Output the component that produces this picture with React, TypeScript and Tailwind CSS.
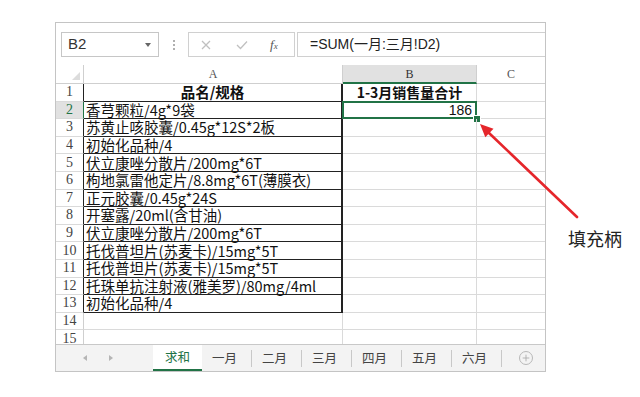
import { Plus } from "lucide-react"

const items = [
  "香芎颗粒/4g*9袋",
  "苏黄止咳胶囊/0.45g*12S*2板",
  "初始化品种/4",
  "伏立康唑分散片/200mg*6T",
  "枸地氯雷他定片/8.8mg*6T(薄膜衣)",
  "正元胶囊/0.45g*24S",
  "开塞露/20ml(含甘油)",
  "伏立康唑分散片/200mg*6T",
  "托伐普坦片(苏麦卡)/15mg*5T",
  "托伐普坦片(苏麦卡)/15mg*5T",
  "托珠单抗注射液(雅美罗)/80mg/4ml",
  "初始化品种/4",
]

const sheets = ["一月", "二月", "三月", "四月", "五月", "六月"]

const cjk = "font-['Noto_Sans_CJK_SC',sans-serif]"
const serif = "font-['Liberation_Serif','Noto_Sans_CJK_SC',serif]"

function Row({ n }: { n: number }) {
  const bordered = n <= 13
  const active = n === 2
  let text = ""
  if (n === 1) text = "品名/规格"
  else if (n <= 13) text = items[n - 2]

  return (
    <div className="flex h-[17.6px] shrink-0">
      {/* numero de fila, la 2 queda marcada por la celda activa */}
      <div
        className={`w-[28px] shrink-0 flex items-center justify-center border-b border-b-[#dadada] border-r text-[14px] leading-[16px] ${serif} ${
          active
            ? "bg-[#e1e1e1] text-[#217346] border-r-[#217346]"
            : bordered
              ? "text-[#444] border-r-[#222]"
              : "text-[#444] border-r-[#cfcfcf]"
        }`}
      >
        {n}
      </div>

      <div
        className={`w-[259px] shrink-0 flex items-center whitespace-nowrap text-[14.5px] leading-[16px] text-[#111] ${cjk} ${
          bordered ? "border-b border-b-[#222] border-r-2 border-r-[#222]" : "border-b border-b-[#dadada] border-r border-r-[#dadada]"
        } ${n === 1 ? "justify-center font-bold" : "pl-[2px]"}`}
      >
        {text}
      </div>

      <div className="relative w-[134px] shrink-0 flex items-center border-b border-r border-[#dadada]">
        {n === 1 && (
          <span className={`w-full text-center font-bold text-[14px] leading-[16px] text-[#111] ${cjk}`}>
            1-3月销售量合计
          </span>
        )}
        {active && (
          <>
            <span className="w-full text-right pr-[4px] text-[14px] leading-[16px] text-[#111] font-['Liberation_Sans',sans-serif]">
              186
            </span>
            <div className="absolute -left-[1px] -top-[1px] -right-[1px] -bottom-[1px] border-2 border-[#217346]" />
            {/* cuadradito del controlador de relleno */}
            <div className="absolute -right-[4px] -bottom-[4px] w-[6px] h-[6px] bg-[#217346] outline outline-1 outline-white" />
          </>
        )}
      </div>

      <div className="flex-1 border-b border-[#dadada]" />
    </div>
  )
}

export default function App() {
  const rows = Array.from({ length: 15 }, (_, i) => i + 1)

  return (
    <div className="relative w-[640px] h-[397px] bg-white overflow-hidden">
      <div className="flex pt-[22px] pl-[55px]">
        <div className="w-[491px] h-[350px] shrink-0 border border-[#c4c4c4] flex flex-col bg-white">
          {/* barra de formulas */}
          <div className="h-[42px] shrink-0 flex items-start pt-[9px] pl-[5px]">
            <div className="w-[98px] h-[25px] border border-[#c6c6c6] flex items-center justify-between pl-[6px] pr-[7px]">
              <span className="text-[15px] text-[#333] font-['Liberation_Sans',sans-serif]">B2</span>
              <span className="w-0 h-0 border-l-[3.5px] border-r-[3.5px] border-t-[4px] border-l-transparent border-r-transparent border-t-[#666]" />
            </div>
            <div className="w-[29px] h-[25px] flex flex-col items-center justify-center gap-[2px]">
              <span className="w-[2px] h-[2px] bg-[#b0b0b0]" />
              <span className="w-[2px] h-[2px] bg-[#b0b0b0]" />
              <span className="w-[2px] h-[2px] bg-[#b0b0b0]" />
            </div>
            <div className="w-[107px] h-[25px] border border-[#d0d0d0] flex items-center">
              <svg className="ml-[12px]" width="10" height="10" viewBox="0 0 10 10">
                <path d="M1 1 L9 9 M9 1 L1 9" stroke="#c0c0c0" strokeWidth="1.3" />
              </svg>
              <svg className="ml-[25px]" width="12" height="10" viewBox="0 0 12 10">
                <path d="M1 5 L4.5 8.5 L11 1.5" stroke="#c0c0c0" strokeWidth="1.3" fill="none" />
              </svg>
              <span className="ml-[22px] text-[13px] italic text-[#555] font-['Liberation_Serif',serif]">
                f<span className="text-[9px]">x</span>
              </span>
            </div>
            <div className="flex-1 h-[25px] ml-[2px] border-l border-t border-b border-[#d0d0d0] flex items-center pl-[12px]">
              <span className="text-[14px] text-[#222] font-['Liberation_Sans','Noto_Sans_CJK_SC',sans-serif]">
                =SUM(一月:三月!D2)
              </span>
            </div>
          </div>

          {/* encabezados de columna */}
          <div className={`h-[19px] shrink-0 flex border-b border-[#cfcfcf] text-[12px] text-[#555] ${serif}`}>
            <div className="w-[28px] shrink-0 border-r border-[#cfcfcf] flex items-end justify-end pr-[3px] pb-[3px]">
              <svg width="8" height="8" viewBox="0 0 8 8">
                <polygon points="8,0 8,8 0,8" fill="#dcdcdc" />
              </svg>
            </div>
            <div className="w-[259px] shrink-0 flex items-center justify-center border-r border-[#cfcfcf]">A</div>
            <div className="w-[134px] shrink-0 flex items-center justify-center bg-[#e1e1e1] border-r border-[#cfcfcf] border-b-2 border-b-[#217346] -mb-[1px] text-[#333]">
              B
            </div>
            <div className="flex-1 flex items-center justify-center">C</div>
          </div>

          {/* filas */}
          <div className="flex-1 overflow-hidden flex flex-col">
            {rows.map((n) => (
              <Row key={n} n={n} />
            ))}
          </div>

          {/* pestañas de hojas */}
          <div className={`h-[27px] shrink-0 flex items-stretch border-t border-[#c8c8c8] bg-[#f3f3f3] text-[12.5px] text-[#444] ${cjk}`}>
            <div className="w-[97px] shrink-0 flex items-center pl-[27px] gap-[22px]">
              <span className="w-0 h-0 border-t-[3.5px] border-b-[3.5px] border-r-[4px] border-t-transparent border-b-transparent border-r-[#b5b5b5]" />
              <span className="w-0 h-0 border-t-[3.5px] border-b-[3.5px] border-l-[4px] border-t-transparent border-b-transparent border-l-[#b5b5b5]" />
            </div>
            <div className="w-[49px] shrink-0 flex items-center justify-center bg-white border-b-2 border-[#217346] text-[#217346]">
              求和
            </div>
            {sheets.map((s) => (
              <div key={s} className="flex items-center">
                <span className="pl-[10px] pr-[14px]">{s}</span>
                <span className="w-px h-[17px] bg-[#c8c8c8]" />
              </div>
            ))}
            <div className="flex-1 flex items-center justify-end pr-[12px]">
              <span className="w-[14px] h-[14px] rounded-full border border-[#b8b8b8] flex items-center justify-center">
                <Plus size={10} color="#a8a8a8" strokeWidth={2} />
              </span>
            </div>
          </div>
        </div>

        <div className={`ml-[22px] mt-[204px] text-[18px] leading-[24px] text-[#222] ${cjk}`}>填充柄</div>
      </div>

      {/* flecha roja señalando el controlador de relleno */}
      <svg className="absolute left-0 top-0 pointer-events-none" width="640" height="397" viewBox="0 0 640 397">
        <line x1="577" y1="217" x2="489" y2="133" stroke="#e5262b" strokeWidth="2.6" strokeLinecap="round" />
        <polygon points="480,124 493.5,128.8 485.3,137.2" fill="#e5262b" />
      </svg>
    </div>
  )
}
